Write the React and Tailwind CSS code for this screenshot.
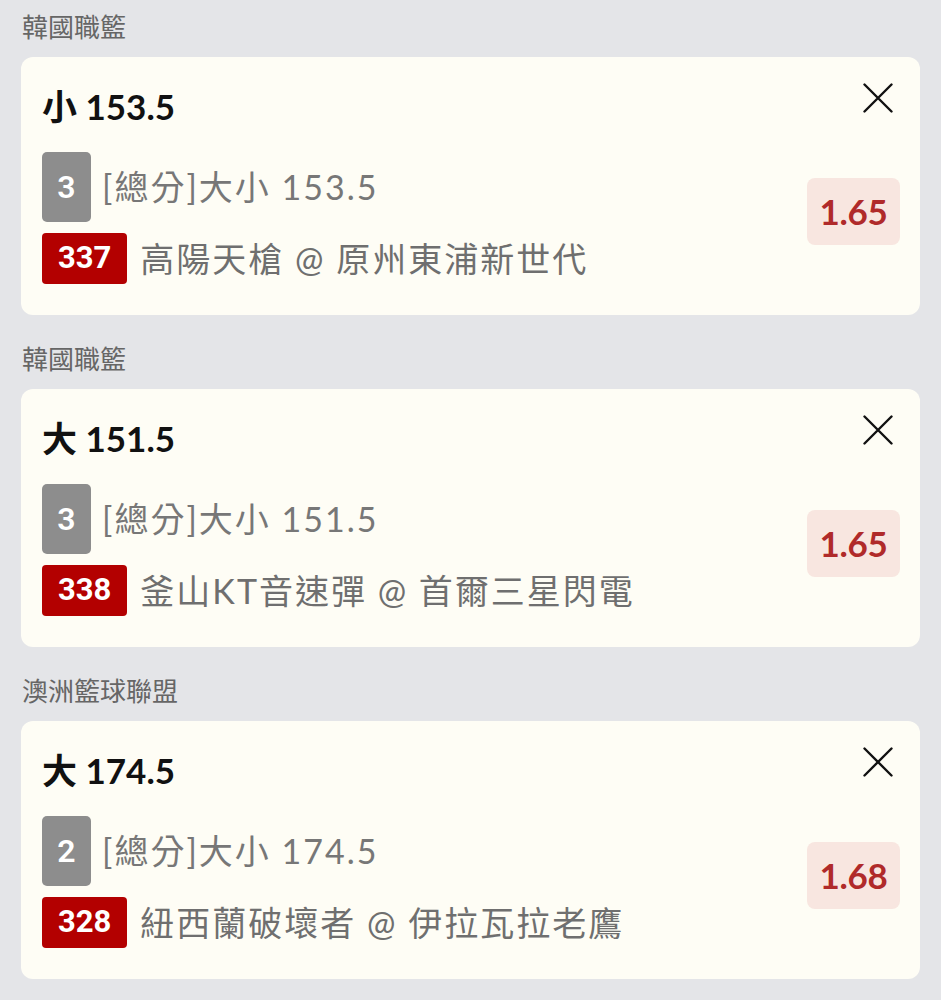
import { useState } from 'react';

const bets = [
  {
    league: '韓國職籃',
    pick: '小 153.5',
    count: 3,
    market: '[總分]大小 153.5',
    code: '337',
    match: '高陽天槍 @ 原州東浦新世代',
    odds: '1.65',
  },
  {
    league: '韓國職籃',
    pick: '大 151.5',
    count: 3,
    market: '[總分]大小 151.5',
    code: '338',
    match: '釜山KT音速彈 @ 首爾三星閃電',
    odds: '1.65',
  },
  {
    league: '澳洲籃球聯盟',
    pick: '大 174.5',
    count: 2,
    market: '[總分]大小 174.5',
    code: '328',
    match: '紐西蘭破壞者 @ 伊拉瓦拉老鷹',
    odds: '1.68',
  },
];

function CloseIcon() {
  return (
    <svg width="30" height="30" viewBox="0 0 30 30" fill="none">
      <path d="M1.5 1.5 L28.5 28.5 M28.5 1.5 L1.5 28.5" stroke="#111" strokeWidth="2.4" strokeLinecap="round" />
    </svg>
  );
}

function BetCard({ bet, onRemove }) {
  return (
    <div>
      <div className="h-[57px] pl-[22px] pt-[8px] text-[26px] leading-[38px] text-[#666]">{bet.league}</div>
      <div className="relative h-[258px] mx-[21px] rounded-[12px] bg-[#fefdf5] pl-[21px] pr-[20px] pt-[26px]">
        {/* Header */}
        <div className="flex items-start justify-between">
          <h2 className="text-[35px] font-bold leading-[46px] text-[#111]">{bet.pick}</h2>
          <button onClick={onRemove} className="mr-[7px] mt-0">
            <CloseIcon />
          </button>
        </div>

        {/* Body */}
        <div className="flex items-start justify-between mt-[23px]">
          <div className="flex flex-col gap-[11px]">
            <div className="flex items-center gap-[11px]">
              <span className="w-[49px] h-[70px] rounded-[5px] bg-[#8d8d8d] text-white flex items-center justify-center text-[32px] font-['Roboto','Liberation_Sans',sans-serif] font-semibold">
                {bet.count}
              </span>
              <span className="text-[34px] leading-[40px] text-[#777] tracking-[2px]">{bet.market}</span>
            </div>
            <div className="flex items-center gap-[13px]">
              <span className="h-[51px] px-[16px] rounded-[4px] bg-[#b30000] text-white flex items-center text-[31px] font-bold font-['Roboto','Liberation_Sans',sans-serif]">
                {bet.code}
              </span>
              <span className="text-[34px] leading-[40px] text-[#6f6f6f] tracking-[2px]">{bet.match}</span>
            </div>
          </div>
          <div className="mt-[26px] w-[93px] h-[67px] rounded-[8px] bg-[#f8e6e0] flex items-center justify-center text-[35px] font-bold text-[#b02a2a] tracking-[-0.3px]">
            {bet.odds}
          </div>
        </div>
      </div>
    </div>
  );
}

export default function App() {
  const [items, setItems] = useState(bets);

  return (
    <div className="min-h-[1000px] bg-[#e4e5e8] font-['Lato','Noto_Sans_CJK_TC',sans-serif]">
      {items.map((bet, i) => (
        <div key={bet.code} className={i > 0 ? 'mt-[17px]' : ''}>
          <BetCard bet={bet} onRemove={() => setItems(items.filter((b) => b.code !== bet.code))} />
        </div>
      ))}
    </div>
  );
}
